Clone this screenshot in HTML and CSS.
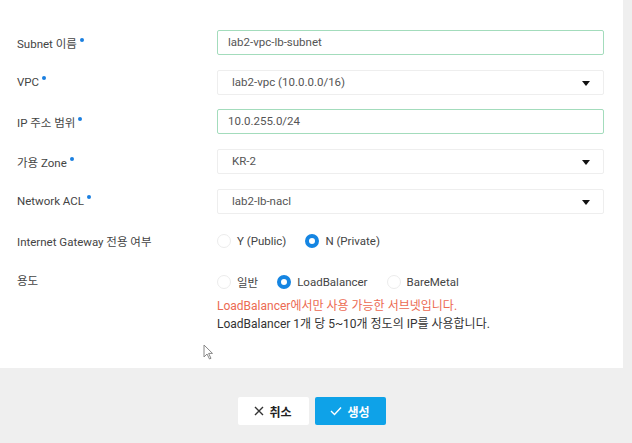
FILE: index.html
```html
<!DOCTYPE html>
<html>

<head>
    <title>Subnet 생성</title>
    <link rel="stylesheet" href="styles.css">
</head>

<body>
    <div class="panel">
        <div class="form">
            <div class="row">
                <div class="label">Subnet 이름<span class="req"></span></div>
                <div class="field input">lab2-vpc-lb-subnet</div>
            </div>
            <div class="row">
                <div class="label">VPC<span class="req"></span></div>
                <div class="field select">lab2-vpc (10.0.0.0/16)<span class="caret"></span></div>
            </div>
            <div class="row">
                <div class="label">IP 주소 범위<span class="req"></span></div>
                <div class="field input">10.0.255.0/24</div>
            </div>
            <div class="row">
                <div class="label">가용 Zone<span class="req"></span></div>
                <div class="field select">KR-2<span class="caret"></span></div>
            </div>
            <div class="row">
                <div class="label">Network ACL<span class="req"></span></div>
                <div class="field select">lab2-lb-nacl<span class="caret"></span></div>
            </div>
            <div class="row radio-row">
                <div class="label">Internet Gateway 전용 여부</div>
                <div class="radios">
                    <label class="radio"><span class="dot"></span>Y (Public)</label>
                    <label class="radio checked"><span class="dot"></span>N (Private)</label>
                </div>
            </div>
            <div class="row radio-row usage">
                <div class="label">용도</div>
                <div>
                    <div class="radios">
                        <label class="radio"><span class="dot"></span>일반</label>
                        <label class="radio checked"><span class="dot"></span>LoadBalancer</label>
                        <label class="radio"><span class="dot"></span>BareMetal</label>
                    </div>
                    <p class="hint warn">LoadBalancer에서만 사용 가능한 서브넷입니다.</p>
                    <p class="hint">LoadBalancer 1개 당 5~10개 정도의 IP를 사용합니다.</p>
                </div>
            </div>
        </div>
        <svg class="cursor" width="11" height="16" viewBox="0 0 11 16">
            <path d="M1 1 L1 13 L4 10 L6.5 15 L8 14.3 L5.6 9.4 L9.5 9.4 Z" fill="#fff" stroke="#888" stroke-width="1"/>
        </svg>
    </div>

    <div class="footer">
        <button class="btn cancel">
            <svg width="10" height="10" viewBox="0 0 10 10"><path d="M1 1 L9 9 M9 1 L1 9" stroke="#333" stroke-width="1.4"/></svg>
            취소
        </button>
        <button class="btn create">
            <svg width="12" height="10" viewBox="0 0 12 10"><path d="M1 5 L4.5 8.5 L11 1.5" fill="none" stroke="#fff" stroke-width="1.4"/></svg>
            생성
        </button>
    </div>
</body>

</html>
```

FILE: styles.css
```css
body {
    margin: 0;
    font-family: Roboto, "Noto Sans CJK KR", sans-serif;
    font-size: 11.5px;
    color: #444;
    background-color: #efefef;
}

.panel {
    position: relative;
    width: 623px;
    height: 368px;
    box-sizing: border-box;
    padding-top: 30px;
    background-color: #fff;
}

.row {
    display: flex;
    align-items: center;
    margin-bottom: 14.7px;
}

.label {
    width: 217px;
    box-sizing: border-box;
    padding-left: 17px;
    color: #444;
}

.req {
    display: inline-block;
    width: 4px;
    height: 4px;
    margin-left: 3px;
    border-radius: 50%;
    background-color: #1a7fe0;
    vertical-align: 6px;
}

.field {
    position: relative;
    width: 387px;
    height: 25px;
    box-sizing: border-box;
    line-height: 23px;
    border-radius: 2px;
    color: #555;
}

.input {
    padding-left: 10px;
    border: 1px solid #a3dcbc;
}

.select {
    padding-left: 14px;
    border: 1px solid #eeeeee;
}

.caret {
    position: absolute;
    right: 13px;
    top: 10px;
    border-left: 4px solid transparent;
    border-right: 4px solid transparent;
    border-top: 5px solid #111;
}

.radio-row {
    height: 25px;
}

.usage {
    align-items: flex-start;
    margin-top: 16px;
}

.usage .label {
    line-height: 25px;
}

.radios {
    display: flex;
    align-items: center;
    height: 25px;
}

.radio {
    display: flex;
    align-items: center;
    margin-right: 19px;
    color: #444;
}

.dot {
    width: 14px;
    height: 14px;
    box-sizing: border-box;
    margin-right: 6px;
    border: 1px solid #ececec;
    border-radius: 50%;
    background-color: #fff;
}

.checked .dot {
    border: 4px solid #1585e2;
}

.hint {
    margin: 0;
    font-size: 12px;
    line-height: 18px;
    color: #333;
}

.warn {
    margin-top: 3px;
    color: #ec6a52;
}

.cursor {
    position: absolute;
    left: 203px;
    top: 344px;
}

.footer {
    display: flex;
    justify-content: center;
    gap: 6px;
    width: 623px;
    padding-top: 29px;
}

.btn {
    display: flex;
    align-items: center;
    justify-content: center;
    gap: 5px;
    width: 71px;
    height: 28px;
    border: none;
    border-radius: 2px;
    font-family: Roboto, "Noto Sans CJK KR", sans-serif;
    font-size: 12px;
    font-weight: bold;
    cursor: pointer;
}

.cancel {
    background-color: #fff;
    color: #222;
}

.create {
    background-color: #0ea2e8;
    color: #fff;
}
```
